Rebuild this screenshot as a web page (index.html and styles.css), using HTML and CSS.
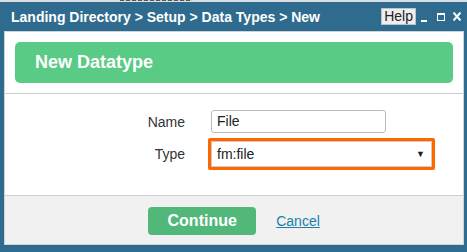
FILE: index.html
```html
<!DOCTYPE html>
<html>
<head>
<meta charset="utf-8">
<link rel="stylesheet" href="styles.css">
</head>
<body>
<div class="behind"><span class="behind-mark"></span></div>
<div class="window">
  <div class="titlebar">
    <div class="title">Landing Directory &gt; Setup &gt; Data Types &gt; New</div>
    <div class="tools">
      <span class="help">Help</span>
      <span class="min"></span>
      <span class="max"></span>
      <svg class="close" width="8" height="9" viewBox="0 0 8 9"><path d="M0.5 0.5L7.5 8.5M7.5 0.5L0.5 8.5" stroke="#fff" stroke-width="2"/></svg>
    </div>
  </div>
  <div class="dialog">
    <div class="head">
      <div class="banner">New Datatype</div>
    </div>
    <div class="form">
      <div class="row">
        <label class="label">Name</label>
        <div class="input">File</div>
      </div>
      <div class="row">
        <label class="label label-type">Type</label>
        <div class="highlight">
          <div class="select"><span>fm:file</span><span class="arrow">▼</span></div>
        </div>
      </div>
    </div>
    <div class="footer">
      <span class="btn">Continue</span>
      <a class="cancel" href="#">Cancel</a>
    </div>
  </div>
</div>
</body>
</html>
```

FILE: styles.css
```css
html, body {
  margin: 0;
  padding: 0;
  background: #2e6b8e;
  font-family: "Liberation Sans", Arial, sans-serif;
}
.behind {
  height: 2px;
  background: #d9dee2;
  display: flex;
  padding-left: 120px;
}
.behind-mark {
  width: 72px;
  height: 1px;
  background: repeating-linear-gradient(90deg, #555 0 4px, #c8ccd0 4px 6px);
}
.window {
  background: #2e6b8e;
  padding: 0 3px 6px 4px;
}
.titlebar {
  height: 29px;
  display: flex;
  align-items: center;
  justify-content: space-between;
}
.title {
  color: #fff;
  font-weight: bold;
  font-size: 14px;
  padding-left: 7px;
  padding-top: 1px;
}
.tools {
  display: flex;
  align-items: center;
  padding-right: 3px;
}
.help {
  background: #eeeeee;
  border: 1px solid #b8c4cc;
  color: #222;
  font-size: 14px;
  line-height: 15px;
  padding: 0 2px;
  margin-right: 5px;
}
.min {
  display: block;
  width: 6px;
  height: 8px;
  border-bottom: 2px solid #fff;
  box-sizing: border-box;
  margin-top: 3px;
  margin-right: 10px;
}
.max {
  display: block;
  width: 8px;
  height: 8px;
  border: 1.5px solid #fff;
  border-top-width: 2px;
  box-sizing: border-box;
  margin-right: 8px;
}
.close {
  display: block;
}
.dialog {
  background: #fff;
  border: 1px solid #c9d6e0;
}
.head {
  padding: 10px;
  border-bottom: 1px solid #cccccc;
}
.banner {
  background: #59cb85;
  border-radius: 5px;
  height: 41px;
  display: flex;
  align-items: center;
  padding-left: 20px;
  color: #fff;
  font-weight: bold;
  font-size: 18px;
}
.form {
  padding: 16px 0 25px 0;
  display: flex;
  flex-direction: column;
  gap: 5px;
}
.row {
  display: flex;
  align-items: center;
}
.label {
  width: 206px;
  text-align: right;
  font-size: 14px;
  color: #333;
  padding-right: 26px;
  box-sizing: border-box;
}
.label-type {
  width: 203px;
  padding-right: 23px;
}
.input {
  width: 175px;
  height: 23px;
  box-sizing: border-box;
  border: 1px solid #bbbbbb;
  border-radius: 3px;
  font-size: 14px;
  color: #222;
  padding-left: 5px;
  line-height: 21px;
}
.highlight {
  border: 3px solid #ff6600;
  border-radius: 2px;
  width: 227px;
  height: 32px;
  box-sizing: border-box;
}
.select {
  height: 26px;
  box-sizing: border-box;
  border: 1px solid #cccccc;
  font-size: 14px;
  color: #222;
  display: flex;
  align-items: center;
  justify-content: space-between;
  padding: 0 6px 0 5px;
}
.arrow {
  font-size: 9px;
}
.footer {
  border-top: 1px solid #cccccc;
  background: #f1f1f1;
  height: 49px;
  display: flex;
  justify-content: center;
  align-items: flex-start;
  gap: 20px;
  padding-top: 11px;
  box-sizing: border-box;
}
.btn {
  background: #52b87a;
  color: #fff;
  font-weight: bold;
  font-size: 16px;
  width: 108px;
  height: 28px;
  border-radius: 4px;
  display: flex;
  align-items: center;
  justify-content: center;
}
.cancel {
  color: #1c7fac;
  font-size: 14px;
  line-height: 28px;
  text-decoration: underline;
}
```
